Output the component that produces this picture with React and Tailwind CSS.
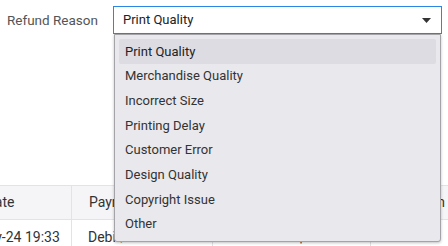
const reasons = [
  "Print Quality",
  "Merchandise Quality",
  "Incorrect Size",
  "Printing Delay",
  "Customer Error",
  "Design Quality",
  "Copyright Issue",
  "Other",
];

export default function App() {
  return (
    <div className="relative h-[246px] w-[448px] overflow-hidden bg-white font-['Roboto',sans-serif] text-[13px]">
      {/* form row */}
      <div className="flex items-center pt-[6px]">
        <label className="w-[113px] pl-[7px] text-[13.5px] text-[#555]">Refund Reason</label>
        <div className="relative flex h-[28px] w-[329px] items-center border border-[#2b86e4] pl-[9px] pr-[10px] text-[#222]">
          <span className="flex-1">Print Quality</span>
          <svg width="9" height="5" viewBox="0 0 9 5" className="text-[#333]">
            <path d="M0 0h9L4.5 5z" fill="currentColor" />
          </svg>
        </div>
      </div>

      {/* table under the form */}
      <div className="mt-[151px] ml-[-71px] w-[580px]">
        <div className="flex h-[35px] items-center border-y border-[#e3e3e6] bg-[#f5f5f7] text-[14px] text-[#333]">
          <div className="w-[142px] shrink-0 text-center">Date</div>
          <div className="h-full w-px bg-[#e3e3e6]" />
          <div className="w-[140px] shrink-0 text-center">Payment Method</div>
          <div className="h-full w-px bg-[#e3e3e6]" />
          <div className="w-[157px] shrink-0 pr-[22px] text-right">Amount</div>
          <div className="h-full w-px bg-[#e3e3e6]" />
          <div className="pl-[3px] whitespace-nowrap">Description</div>
        </div>
        <div className="flex h-[34px] items-center text-[14px] text-[#333]">
          <div className="w-[142px] shrink-0 whitespace-nowrap text-center">2024-May-24 19:33</div>
          <div className="h-full w-px bg-[#e3e3e6]" />
          <div className="w-[140px] shrink-0 text-center">Debit/Credit Card</div>
          <div className="h-full w-px bg-[#e3e3e6]" />
          <div className="w-[157px] shrink-0 pr-[22px] text-right">$115.00</div>
          <div className="h-full w-px bg-[#e3e3e6]" />
          <div className="pl-[9px] whitespace-nowrap">1 item</div>
        </div>
      </div>

      {/* open dropdown */}
      <div className="absolute left-[114px] top-[34px] w-[327px] rounded-b-[3px] border border-[#a3a3a8] bg-[#e9e8ed] px-[4px] py-[4px] shadow-[0_1px_3px_rgba(0,0,0,0.25)]">
        {reasons.map((r, i) => (
          <div
            key={r}
            className={
              i === 0
                ? "flex h-[24.7px] items-center rounded-[2px] bg-[#dddce2] pl-[6px] text-[#222]"
                : "flex h-[24.7px] items-center pl-[6px] text-[#333]"
            }
          >
            {r}
          </div>
        ))}
      </div>
    </div>
  );
}
